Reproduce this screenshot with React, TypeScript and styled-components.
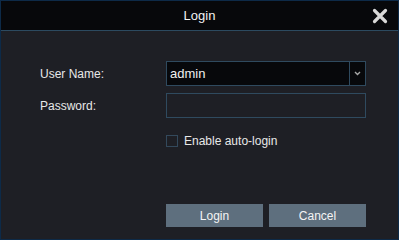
import styled, { createGlobalStyle } from "styled-components";

const Global = createGlobalStyle`
  html, body {
    margin: 0;
    padding: 0;
    background: #1f2026;
  }
  * {
    box-sizing: border-box;
  }
`;

const Dialog = styled.div`
  width: 399px;
  height: 240px;
  border: 1px solid #0d2a48;
  background: #1e1f25;
  display: flex;
  flex-direction: column;
  font-family: "Liberation Sans", Arial, sans-serif;
  color: #e6e6e6;
`;

const TitleBar = styled.div`
  height: 30px;
  flex: none;
  background: #07080b;
  border-bottom: 1px solid #2c4a60;
  display: flex;
  align-items: center;
  justify-content: center;
  position: relative;
  font-size: 13px;
  color: #f2f2f2;
`;

const Close = styled.button`
  position: absolute;
  right: 10px;
  top: 7px;
  width: 16px;
  height: 16px;
  padding: 0;
  border: none;
  background: none;
  cursor: pointer;
  display: flex;
`;

const Body = styled.div`
  flex: 1;
  padding: 30px 32px 0 39px;
  display: flex;
  flex-direction: column;
`;

const Row = styled.div<{ $gap?: number }>`
  display: flex;
  align-items: center;
  height: 25px;
  margin-bottom: ${(p) => p.$gap ?? 0}px;
`;

const Label = styled.div`
  width: 126px;
  font-size: 12px;
  color: #e8e8e8;
`;

const Select = styled.div`
  width: 200px;
  height: 25px;
  border: 1px solid #2f4a5f;
  background: #07080b;
  display: flex;
  align-items: stretch;
`;

const SelectValue = styled.div`
  flex: 1;
  padding-left: 3px;
  font-size: 13px;
  display: flex;
  align-items: center;
  color: #f0f0f0;
`;

const SelectArrow = styled.div`
  width: 16px;
  border-left: 1px solid #2f4a5f;
  display: flex;
  align-items: center;
  justify-content: center;
`;

const Input = styled.input`
  width: 200px;
  height: 25px;
  border: 1px solid #2f4a5f;
  background: #1e1f25;
  outline: none;
  color: #f0f0f0;
  font-family: inherit;
`;

const CheckRow = styled.label`
  display: flex;
  align-items: center;
  margin-left: 126px;
  margin-top: 16px;
  font-size: 12px;
  color: #e8e8e8;
  gap: 6px;
`;

const Box = styled.span`
  width: 12px;
  height: 12px;
  border: 1px solid #33495c;
  background: #1e1f25;
  display: inline-block;
`;

const Buttons = styled.div`
  display: flex;
  gap: 6px;
  margin-left: 126px;
  margin-top: 56px;
`;

const Button = styled.button`
  width: 97px;
  height: 23px;
  border: none;
  background: #5e6f7e;
  color: #f4f4f4;
  font-family: inherit;
  font-size: 12px;
  padding: 0;
`;

export default function App() {
  return (
    <>
      <Global />
      <Dialog>
        <TitleBar>
          Login
          <Close aria-label="close">
            <svg width="16" height="16" viewBox="0 0 16 16">
              <path
                d="M2.5 2.5 L13.5 13.5 M13.5 2.5 L2.5 13.5"
                stroke="#d8d8d8"
                strokeWidth="3.2"
                strokeLinecap="round"
              />
            </svg>
          </Close>
        </TitleBar>
        <Body>
          <Row $gap={7}>
            <Label>User Name:</Label>
            <Select>
              <SelectValue>admin</SelectValue>
              <SelectArrow>
                <svg width="7" height="5" viewBox="0 0 7 5">
                  <path d="M1 1 L3.5 3.5 L6 1" stroke="#a8a8a8" strokeWidth="1.4" fill="none" />
                </svg>
              </SelectArrow>
            </Select>
          </Row>
          <Row>
            <Label>Password:</Label>
            <Input type="password" />
          </Row>
          <CheckRow>
            <Box />
            Enable auto-login
          </CheckRow>
          <Buttons>
            <Button>Login</Button>
            <Button>Cancel</Button>
          </Buttons>
        </Body>
      </Dialog>
    </>
  );
}
